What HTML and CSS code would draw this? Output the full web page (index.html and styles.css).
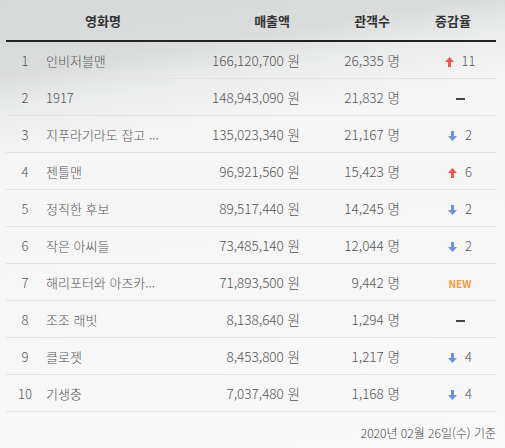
FILE: index.html
```html
<!DOCTYPE html>
<html lang="ko">
<head>
    <meta charset="UTF-8">
    <meta name="viewport" content="width=device-width, initial-scale=1.0">
    <title>박스오피스</title>
    <link rel="stylesheet" href="styles.css">
</head>
<body>

    <div class="board">
        <table class="rank-table">
            <colgroup>
                <col class="c-rank">
                <col class="c-title">
                <col class="c-sales">
                <col class="c-audi">
                <col class="c-change">
            </colgroup>
            <thead>
                <tr>
                    <th colspan="2" class="th-name">영화명</th>
                    <th class="th-num">매출액</th>
                    <th class="th-num">관객수</th>
                    <th class="th-change">증감율</th>
                </tr>
            </thead>
            <tbody>
                <tr>
                    <td class="rank">1</td>
                    <td class="title">인비저블맨</td>
                    <td class="num">166,120,700 원</td>
                    <td class="num">26,335 명</td>
                    <td class="change"><span class="up"><svg width="9" height="10" viewBox="0 0 9 10"><path d="M4.5 0L9 5H6V10H3V5H0Z" fill="#f0574f"/></svg></span>11</td>
                </tr>
                <tr>
                    <td class="rank">2</td>
                    <td class="title">1917</td>
                    <td class="num">148,943,090 원</td>
                    <td class="num">21,832 명</td>
                    <td class="change"><span class="dash"></span></td>
                </tr>
                <tr>
                    <td class="rank">3</td>
                    <td class="title">지푸라기라도 잡고 ...</td>
                    <td class="num">135,023,340 원</td>
                    <td class="num">21,167 명</td>
                    <td class="change"><span class="down"><svg width="9" height="10" viewBox="0 0 9 10"><path d="M4.5 10L9 5H6V0H3V5H0Z" fill="#6e91da"/></svg></span>2</td>
                </tr>
                <tr>
                    <td class="rank">4</td>
                    <td class="title">젠틀맨</td>
                    <td class="num">96,921,560 원</td>
                    <td class="num">15,423 명</td>
                    <td class="change"><span class="up"><svg width="9" height="10" viewBox="0 0 9 10"><path d="M4.5 0L9 5H6V10H3V5H0Z" fill="#f0574f"/></svg></span>6</td>
                </tr>
                <tr>
                    <td class="rank">5</td>
                    <td class="title">정직한 후보</td>
                    <td class="num">89,517,440 원</td>
                    <td class="num">14,245 명</td>
                    <td class="change"><span class="down"><svg width="9" height="10" viewBox="0 0 9 10"><path d="M4.5 10L9 5H6V0H3V5H0Z" fill="#6e91da"/></svg></span>2</td>
                </tr>
                <tr>
                    <td class="rank">6</td>
                    <td class="title">작은 아씨들</td>
                    <td class="num">73,485,140 원</td>
                    <td class="num">12,044 명</td>
                    <td class="change"><span class="down"><svg width="9" height="10" viewBox="0 0 9 10"><path d="M4.5 10L9 5H6V0H3V5H0Z" fill="#6e91da"/></svg></span>2</td>
                </tr>
                <tr>
                    <td class="rank">7</td>
                    <td class="title">해리포터와 아즈카...</td>
                    <td class="num">71,893,500 원</td>
                    <td class="num">9,442 명</td>
                    <td class="change"><span class="new">NEW</span></td>
                </tr>
                <tr>
                    <td class="rank">8</td>
                    <td class="title">조조 래빗</td>
                    <td class="num">8,138,640 원</td>
                    <td class="num">1,294 명</td>
                    <td class="change"><span class="dash"></span></td>
                </tr>
                <tr>
                    <td class="rank">9</td>
                    <td class="title">클로젯</td>
                    <td class="num">8,453,800 원</td>
                    <td class="num">1,217 명</td>
                    <td class="change"><span class="down"><svg width="9" height="10" viewBox="0 0 9 10"><path d="M4.5 10L9 5H6V0H3V5H0Z" fill="#6e91da"/></svg></span>4</td>
                </tr>
                <tr>
                    <td class="rank">10</td>
                    <td class="title">기생충</td>
                    <td class="num">7,037,480 원</td>
                    <td class="num">1,168 명</td>
                    <td class="change"><span class="down"><svg width="9" height="10" viewBox="0 0 9 10"><path d="M4.5 10L9 5H6V0H3V5H0Z" fill="#6e91da"/></svg></span>4</td>
                </tr>
            </tbody>
        </table>

        <p class="base-date">2020년 02월 26일(수) 기준</p>
    </div>

</body>
</html>
```

FILE: styles.css
```css
/* 기본 */
body {
    margin: 0;
    font-family: 'Noto Sans CJK KR', 'Noto Sans', sans-serif;
    font-weight: 300;
    color: #555;
    background: linear-gradient(171deg, #d6d9d9 0%, #dadcdc 14%, #ebecec 21%, #f5f5f5 30%, #f8f8f8 100%);
    height: 448px;
}

.board {
    padding: 0 9px 0 6px;
}

/* 표 */
.rank-table {
    width: 490px;
    border-collapse: collapse;
    table-layout: fixed;
}

.c-rank { width: 40px; }
.c-title { width: 160px; }
.c-sales { width: 94px; }
.c-audi { width: 100px; }
.c-change { width: 96px; }

.rank-table th {
    height: 40px;
    padding: 0;
    font-size: 13px;
    font-weight: bold;
    color: #333;
    border-bottom: 2px solid #222;
}

.rank-table th.th-name {
    text-align: center;
    padding-right: 6px;
}

.rank-table th.th-num {
    text-align: right;
    padding-right: 10px;
}

.rank-table th.th-change {
    text-align: center;
    padding-left: 10px;
}

.rank-table td {
    height: 36px;
    padding: 0;
    font-size: 13px;
    border-bottom: 1px solid #e2e2e2;
    white-space: nowrap;
    overflow: hidden;
}

.rank-table td.rank {
    text-align: center;
    padding-right: 2px;
}

.rank-table td.num {
    text-align: right;
    font-size: 13.5px;
}

.rank-table td.change {
    text-align: center;
    padding-left: 24px;
}

.up, .down {
    display: inline-block;
    margin-right: 8px;
}

.up svg, .down svg {
    vertical-align: -1px;
}

.dash {
    display: inline-block;
    width: 9px;
    height: 2px;
    background: #444;
    vertical-align: middle;
}

.new {
    font-size: 10px;
    font-weight: bold;
    color: #f39a3d;
}

/* 기준일 */
.base-date {
    margin: 12px 0 0;
    text-align: right;
    font-size: 12px;
    color: #444;
}
```
